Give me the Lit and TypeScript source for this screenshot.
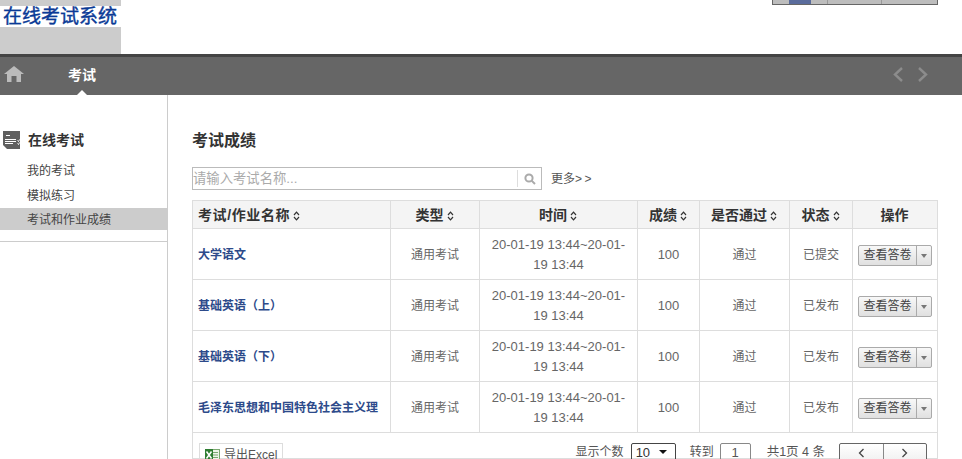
import { LitElement, html, css } from "lit";
import { customElement } from "lit/decorators.js";

const rows = [
  ["大学语文", "已提交"],
  ["基础英语（上）", "已发布"],
  ["基础英语（下）", "已发布"],
  ["毛泽东思想和中国特色社会主义理", "已发布"],
];

@customElement("app-root")
export class AppRoot extends LitElement {
  static styles = css`
    :host { display: block; width: 962px; height: 459px; overflow: hidden; background: #fff; color: #555;
      font: 13px/20px "Liberation Sans", "Noto Sans CJK SC", sans-serif; }
    * { box-sizing: border-box; }
    .top { height: 54px; display: flex; justify-content: space-between; }
    .logo { width: 121px; background: #ccc; padding-top: 6px; }
    .logo div { height: 21px; background: #fff; color: #0a3a96; font-size: 19px; -webkit-text-stroke: 0.4px #0a3a96; line-height: 21px; padding-left: 3px; white-space: nowrap; }
    .tools { width: 166px; height: 5px; margin-right: 24px; background: #bdbdbd; border: 1px solid #666; border-top: 0; display: flex; }
    .tools i { display: block; height: 4px; width: 55px; border-right: 1px solid #999; }
    .tools i:first-child { background: linear-gradient(to right, #bdbdbd 16px, #5a6c9c 16px, #5a6c9c 38px, #bdbdbd 38px); }
    nav { height: 41px; background: #666; border-top: 3px solid #444; display: flex; align-items: center; position: relative; color: #fff; }
    .home { margin: -5px 0 0 4px; width: 20px; height: 16px; fill: #bbb; display: block; }
    .tab { margin: -2px 0 0 44px; font-size: 14px; font-weight: bold; }
    .caret { position: absolute; left: 77px; bottom: 0; width: 0; height: 0; border: 5px solid transparent; border-top: 0; border-bottom-color: #fff; }
    .arrows { margin: -4px 34px 0 auto; display: flex; gap: 15px; }
    .arrows svg { width: 10px; height: 15px; fill: none; stroke: #8c8c8c; stroke-width: 2.4; display: block; }
    .body { display: flex; height: 364px; }
    aside { width: 168px; flex: none; border-right: 1px solid #ccc; padding-top: 33px; }
    .side-title { display: flex; align-items: center; height: 24px; padding-left: 3px; font-size: 14px; font-weight: bold; color: #333; gap: 8px; }
    .side-title svg { width: 17px; height: 18px; display: block; flex: none; }
    .menu { margin-top: 6px; border-bottom: 1px solid #ccc; padding-bottom: 11px; }
    .menu div { height: 25px; line-height: 26px; padding-left: 27px; font-size: 12px; color: #444; }
    .menu .on { height: 22px; line-height: 24px; background: #ccc; }
    main { flex: 1; padding: 34px 24px 0 24px; min-width: 0; }
    h2 { margin: 0; font-size: 16px; line-height: 24px; font-weight: bold; color: #333; }
    .search { display: flex; align-items: center; margin-top: 14px; height: 23px; }
    .box { width: 350px; height: 23px; border: 1px solid #bbb; display: flex; align-items: center; justify-content: space-between; }
    .box span { color: #aaa; font-size: 13.33px; }
    .mag { width: 24px; height: 17px; border-left: 1px solid #ddd; display: flex; align-items: center; justify-content: center; }
    .mag svg { width: 12px; height: 12px; fill: none; stroke: #aaa; stroke-width: 2; display: block; }
    .more { margin-left: 9px; font-size: 12px; color: #555; }
    .more em { font-style: normal; letter-spacing: 2.5px; }
    table { margin-top: 10px; border-collapse: collapse; table-layout: fixed; width: 745px; }
    th, td { border: 1px solid #ddd; padding: 0; text-align: center; }
    th { height: 28px; background: #f4f4f4; font-size: 14px; color: #333; font-weight: bold; padding-right: 1px; }
    th.l { text-align: left; padding-left: 5px; letter-spacing: 0.6px; }
    td { height: 51px; font-size: 12px; line-height: 20px; color: #666; padding-top: 1px; }
    td.name { text-align: left; padding-left: 5px; color: #2d4a8a; font-weight: bold; white-space: nowrap; }
    td.time { padding: 1px 8px 0; font-size: 13px; color: #666; }
    td.num { font-size: 13px; }
    .sort { display: inline-block; vertical-align: -1px; margin-left: 3px; width: 7px; height: 10px; }
    .sort svg { display: block; width: 7px; height: 10px; fill: none; stroke: #333; stroke-width: 1.2; }
    .btn { display: inline-flex; vertical-align: middle; margin-top: 2px; height: 21px; width: 74px; border: 1px solid #aaa; border-radius: 2px; background: linear-gradient(#f8f8f8, #e0e0e0); color: #444; font-size: 12px; line-height: 19px; }
    .btn b { flex: 1; font-weight: normal; border-right: 1px solid #aaa; }
    .btn i { width: 14px; display: flex; align-items: center; justify-content: center; }
    .btn i::after { content: ""; border: 3.5px solid transparent; border-top: 4px solid #777; border-bottom: 0; }
    .foot { width: 746px; height: 26px; border: 1px solid #ddd; border-top: 0; display: flex; align-items: flex-start; padding: 10px 10px 0 6px; font-size: 12px; color: #555; }
    .xls { height: 30px; width: 84px; border: 1px solid #ddd; display: flex; align-items: center; gap: 4px; padding: 0 0 6px 5px; font-size: 12px; }
    .xls svg { width: 15px; height: 14px; display: block; flex: none; }
    .spacer { flex: 1; }
    .sel { margin-left: 7px; width: 45px; height: 22px; border: 1px solid #444; border-radius: 2px; padding-left: 4px; line-height: 17px; color: #333; font-size: 13px; position: relative; }
    .sel::after { content: ""; position: absolute; right: 8px; top: 6px; border: 4px solid transparent; border-top: 4px solid #111; border-bottom: 0; }
    .go { margin-left: 14px; }
    .inp { margin-left: 6px; width: 31px; height: 22px; border: 1px solid #888; border-radius: 2px; text-align: center; line-height: 17px; font-size: 13px; }
    .tot { margin-left: 16px; font-size: 12.5px; }
    .pager { margin-left: 14px; display: flex; width: 88px; height: 22px; border: 1px solid #666; border-radius: 2px; background: linear-gradient(#fff, #eee); }
    .pager span { flex: 1; display: flex; justify-content: center; padding-top: 4px; }
    .pager span:first-child { border-right: 1px solid #888; }
    .pager svg { width: 7px; height: 10px; fill: none; stroke: #444; stroke-width: 1.3; display: block; }
    .lbl { white-space: nowrap; line-height: 18px; }
  `;

  sort() {
    return html`<span class="sort"><svg viewBox="0 0 7 10"><path d="M1 4 3.5 1.2 6 4M1 6 3.5 8.8 6 6"/></svg></span>`;
  }

  render() {
    return html`
      <div class="top">
        <div class="logo"><div>在线考试系统</div></div>
        <div class="tools"><i></i><i></i><i style="border:0"></i></div>
      </div>
      <nav>
        <svg class="home" viewBox="0 0 20 16"><path d="M10 0 20 8h-3v8h-4.500v-6h-5v6H3V8H0z"/></svg>
        <span class="tab">考试</span>
        <span class="caret"></span>
        <div class="arrows">
          <svg viewBox="0 0 10 15"><path d="M9 1 2 7.500 9 14"/></svg>
          <svg viewBox="0 0 10 15"><path d="M1 1 8 7.500 1 14"/></svg>
        </div>
      </nav>
      <div class="body">
        <aside>
          <div class="side-title">
            <svg viewBox="0 0 17 18">
              <path fill="#5f5f5f" d="M0 0h17v18H4l-4-4z"/>
              <path stroke="#fff" stroke-width="1" fill="none" d="M2 8.500h11M2 10.500h11M2 12.500h8M3 4.500h4M14.500 9.500l1 1 1-2M14.500 12.500l1 1 1-2"/>
            </svg>
            在线考试
          </div>
          <div class="menu">
            <div>我的考试</div>
            <div>模拟练习</div>
            <div class="on">考试和作业成绩</div>
          </div>
        </aside>
        <main>
          <h2>考试成绩</h2>
          <div class="search">
            <div class="box">
              <span>请输入考试名称...</span>
              <div class="mag"><svg viewBox="0 0 12 12"><circle cx="5" cy="5" r="3.600"/><path d="M7.600 7.600 11 11"/></svg></div>
            </div>
            <span class="more">更多<em>&gt;&gt;</em></span>
          </div>
          <table>
            <colgroup>
              <col style="width:198px" /><col style="width:89px" /><col style="width:158px" />
              <col style="width:62px" /><col style="width:90px" /><col style="width:63px" /><col style="width:85px" />
            </colgroup>
            <thead>
              <tr>
                <th class="l">考试/作业名称${this.sort()}</th>
                <th>类型${this.sort()}</th>
                <th>时间${this.sort()}</th>
                <th>成绩${this.sort()}</th>
                <th>是否通过${this.sort()}</th>
                <th>状态${this.sort()}</th>
                <th>操作</th>
              </tr>
            </thead>
            <tbody>
              ${rows.map(
                ([name, st]) => html`<tr>
                  <td class="name">${name}</td>
                  <td>通用考试</td>
                  <td class="time">20-01-19 13:44~20-01-19 13:44</td>
                  <td class="num">100</td>
                  <td>通过</td>
                  <td>${st}</td>
                  <td><span class="btn"><b>查看答卷</b><i></i></span></td>
                </tr>`
              )}
            </tbody>
          </table>
          <div class="foot">
            <div class="xls">
              <svg viewBox="0 0 15 14"><rect x="5.500" y="1.500" width="9" height="11" fill="#eef5ea" stroke="#7aa870"/><path d="M8 4.500h5M8 7h5M8 9.500h5" stroke="#7aa870"/><rect x="0" y="1" width="8" height="12" fill="#2f7d32"/><path d="M1.500 3.500 6.500 10.500M6.500 3.500 1.500 10.500" stroke="#fff" stroke-width="1.500"/></svg>
              <span class="lbl">导出Excel</span>
            </div>
            <span class="spacer"></span>
            <span class="lbl">显示个数</span>
            <span class="sel">10</span>
            <span class="lbl go">转到</span>
            <span class="inp">1</span>
            <span class="lbl tot">共1页 4 条</span>
            <div class="pager">
              <span><svg viewBox="0 0 7 10"><path d="M5.500 1 1.500 5l4 4"/></svg></span>
              <span><svg viewBox="0 0 7 10"><path d="M1.500 1l4 4-4 4"/></svg></span>
            </div>
          </div>
        </main>
      </div>
    `;
  }
}
